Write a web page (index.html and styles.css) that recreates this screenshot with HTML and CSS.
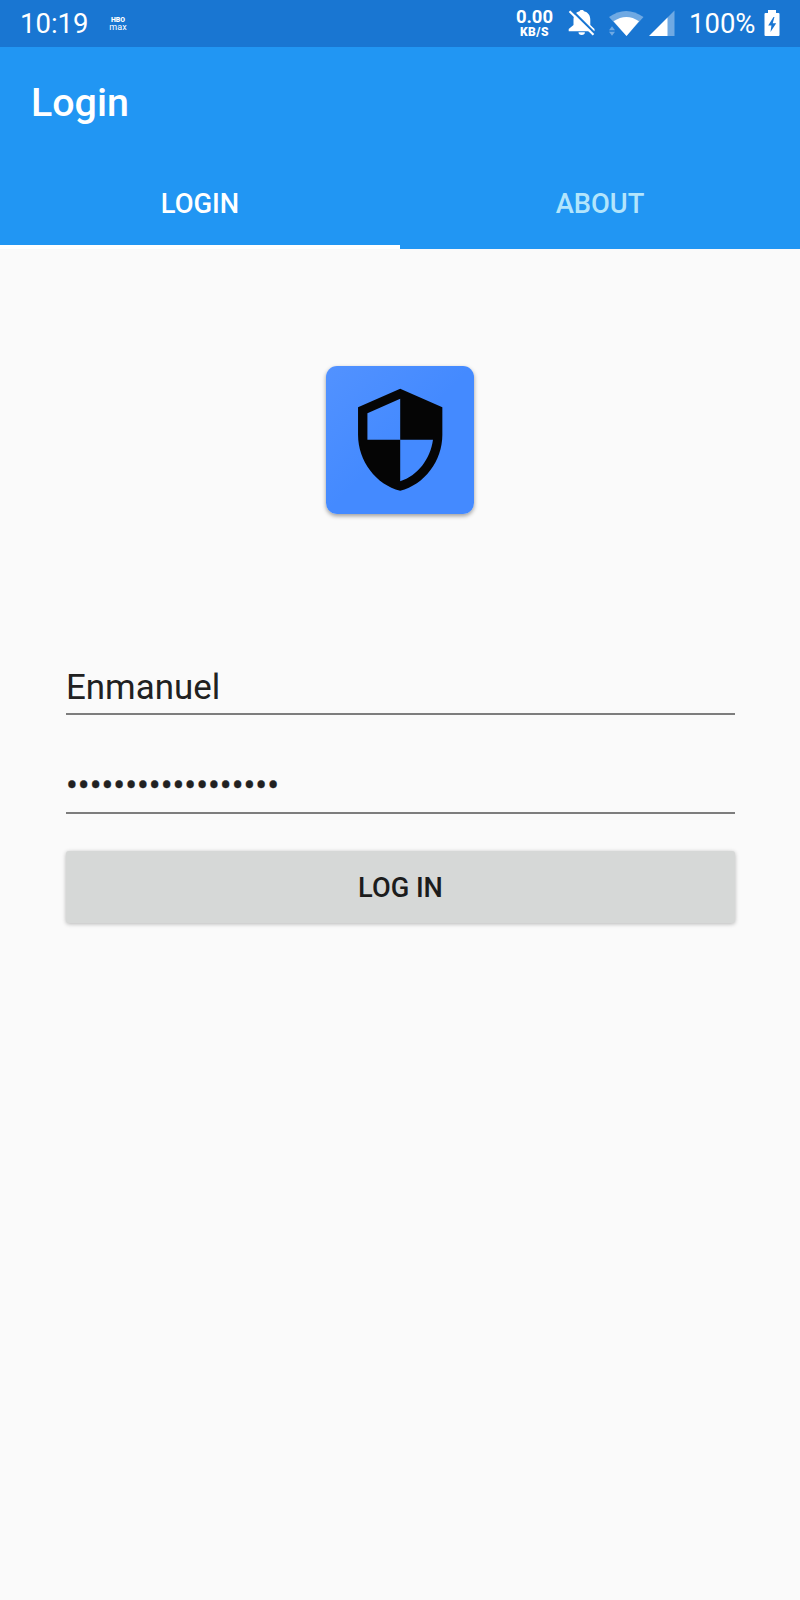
FILE: index.html
```html
<!DOCTYPE html>
<html lang="en">
<head>
<meta charset="utf-8">
<title>Login</title>
<link rel="stylesheet" href="styles.css">
</head>
<body>
<div class="status">
  <span class="clock">10:19</span>
  <span class="notif"><b>HBO</b><span>max</span></span>
  <span class="speed"><b>0.00</b><small>KB/S</small></span>
  <svg class="system-icons" width="112" height="47" viewBox="565 0 112 47" aria-hidden="true">
    <path fill="#fff" d="M568.700 31.300v-2.300l4.800-4v-5c0-5 2.500-7.800 6-8.700l1-1.300h2.500l1 1.300c4 .9 6.300 4 6.300 8.700v5l4.200 4v2.300zM578.500 32.300h6.400a3.200 2.700 0 0 1-6.400 0z"/>
    <path stroke="#1976d2" stroke-width="2.400" d="M570.500 9l25 25"/>
    <path stroke="#fff" stroke-width="2.200" d="M569.500 11.300L593.500 34.800"/>
    <path fill="#6fa9e3" d="M609 17q17-12 34.500 0l-17 19z"/>
    <path fill="#fff" d="M613.500 21.300q13-8.500 25.500 0L626.500 36z"/>
    <path fill="#6fa9e3" d="M609 30.300l3-4 3 4zM609 31.700l3 4 3-4z"/>
    <path fill="#6fa9e3" d="M674.500 10.500V36H667V18z"/>
    <path fill="#fff" d="M649 36L667.500 17.500V36z"/>
  </svg>
  <span class="percent">100%</span>
  <svg class="battery" width="16" height="27" viewBox="0 0 16 27" aria-hidden="true">
    <path fill="#fff" d="M4 0h8v3h2.500q1 0 1 1v21q0 1-1 1h-13q-1 0-1-1V4q0-1 1-1H4z"/>
    <path fill="#1976d2" d="M9.500 7L4.200 15.500h3.200l-.9 6.500 5.700-8.700H8.700L10.500 7z"/>
  </svg>
</div>
<header class="appbar">
  <h1 class="title">Login</h1>
  <nav class="tabs">
    <a class="tab active">LOGIN</a>
    <a class="tab">ABOUT</a>
  </nav>
</header>
<main class="content">
  <div class="logo">
    <svg width="112.400" height="111.400" viewBox="0 0 24 24" preserveAspectRatio="none" aria-hidden="true">
      <path fill="#050505" d="M12 1L3 5v6c0 5.550 3.840 10.740 9 12 5.160-1.260 9-6.450 9-12V5l-9-4zm0 10.990h7c-.53 4.120-3.280 7.790-7 8.940V12H5V6.300l7-3.110v8.800z"/>
    </svg>
  </div>
  <div class="field">Enmanuel</div>
  <div class="field password">••••••••••••••••••</div>
  <button class="submit">LOG IN</button>
</main>
</body>
</html>
```
FILE: styles.css
```css
* { box-sizing: border-box; }
body {
  margin: 0;
  width: 800px;
  height: 1600px;
  background: #fafafa;
  font-family: Roboto, sans-serif;
  overflow: hidden;
}
.status {
  height: 47px;
  display: flex;
  align-items: flex-start;
  background: #1976d2;
  color: #fff;
}
.clock {
  width: 89px;
  padding-left: 20px;
  font-size: 27.500px;
  line-height: 47px;
}
.notif {
  width: 18px;
  margin: 17px 0 0 20px;
  display: flex;
  flex-direction: column;
  align-items: center;
  font-size: 9px;
  line-height: 6px;
}
.notif b { font-size: 6.900px; line-height: 7px; font-weight: 900; }
.speed {
  width: 50px;
  margin-left: 382.500px;
  padding-top: 7px;
  display: flex;
  flex-direction: column;
  align-items: center;
}
.speed b { font-size: 18.500px; line-height: 20px; font-weight: 700; }
.speed small { font-size: 12px; line-height: 10px; font-weight: 900; letter-spacing: .5px; }
.system-icons { margin-left: 5.500px; }
.percent {
  width: 74px;
  margin-left: 12px;
  font-size: 27.500px;
  line-height: 47px;
}
.battery { margin: 10px 0 0 1px; }
.appbar {
  height: 202px;
  background: #2196f3;
  color: #fff;
}
.title {
  margin: 0;
  height: 109px;
  padding-left: 31px;
  font-size: 39.400px;
  font-weight: 500;
  line-height: 112px;
}
.tabs { display: flex; height: 93px; }
.tab {
  flex: 1;
  border-bottom: 4px solid transparent;
  text-align: center;
  font-size: 27.300px;
  font-weight: 500;
  line-height: 96px;
  color: #b3e5fc;
}
.tab.active { color: #fff; border-color: #fff; }
.content {
  padding: 117px 65px 0 66px;
  display: flex;
  flex-direction: column;
}
.logo {
  align-self: center;
  width: 148px;
  height: 148px;
  margin-right: 1px;
  border-radius: 11px;
  background: linear-gradient(135deg, #5292ff, #448aff 50%);
  box-shadow: 0 2px 4px rgba(0, 0, 0, .38);
  display: flex;
  align-items: center;
  justify-content: center;
}
.field {
  height: 64px;
  margin-top: 137px;
  border-bottom: 2px solid #7d7d7d;
  font-size: 34.900px;
  line-height: 73px;
  color: #212121;
}
.field.password {
  margin-top: 35px;
  line-height: 71px;
  font-size: 35.100px;
  -webkit-text-stroke: .3px #212121;
}
.submit {
  height: 72px;
  margin-top: 37px;
  padding: 0;
  border: 0;
  border-radius: 3px;
  background: #d6d8d7;
  box-shadow: 0 1px 4px rgba(0, 0, 0, .28);
  font: 500 27.200px/74px Roboto, sans-serif;
  color: #1c1c1c;
}
```
